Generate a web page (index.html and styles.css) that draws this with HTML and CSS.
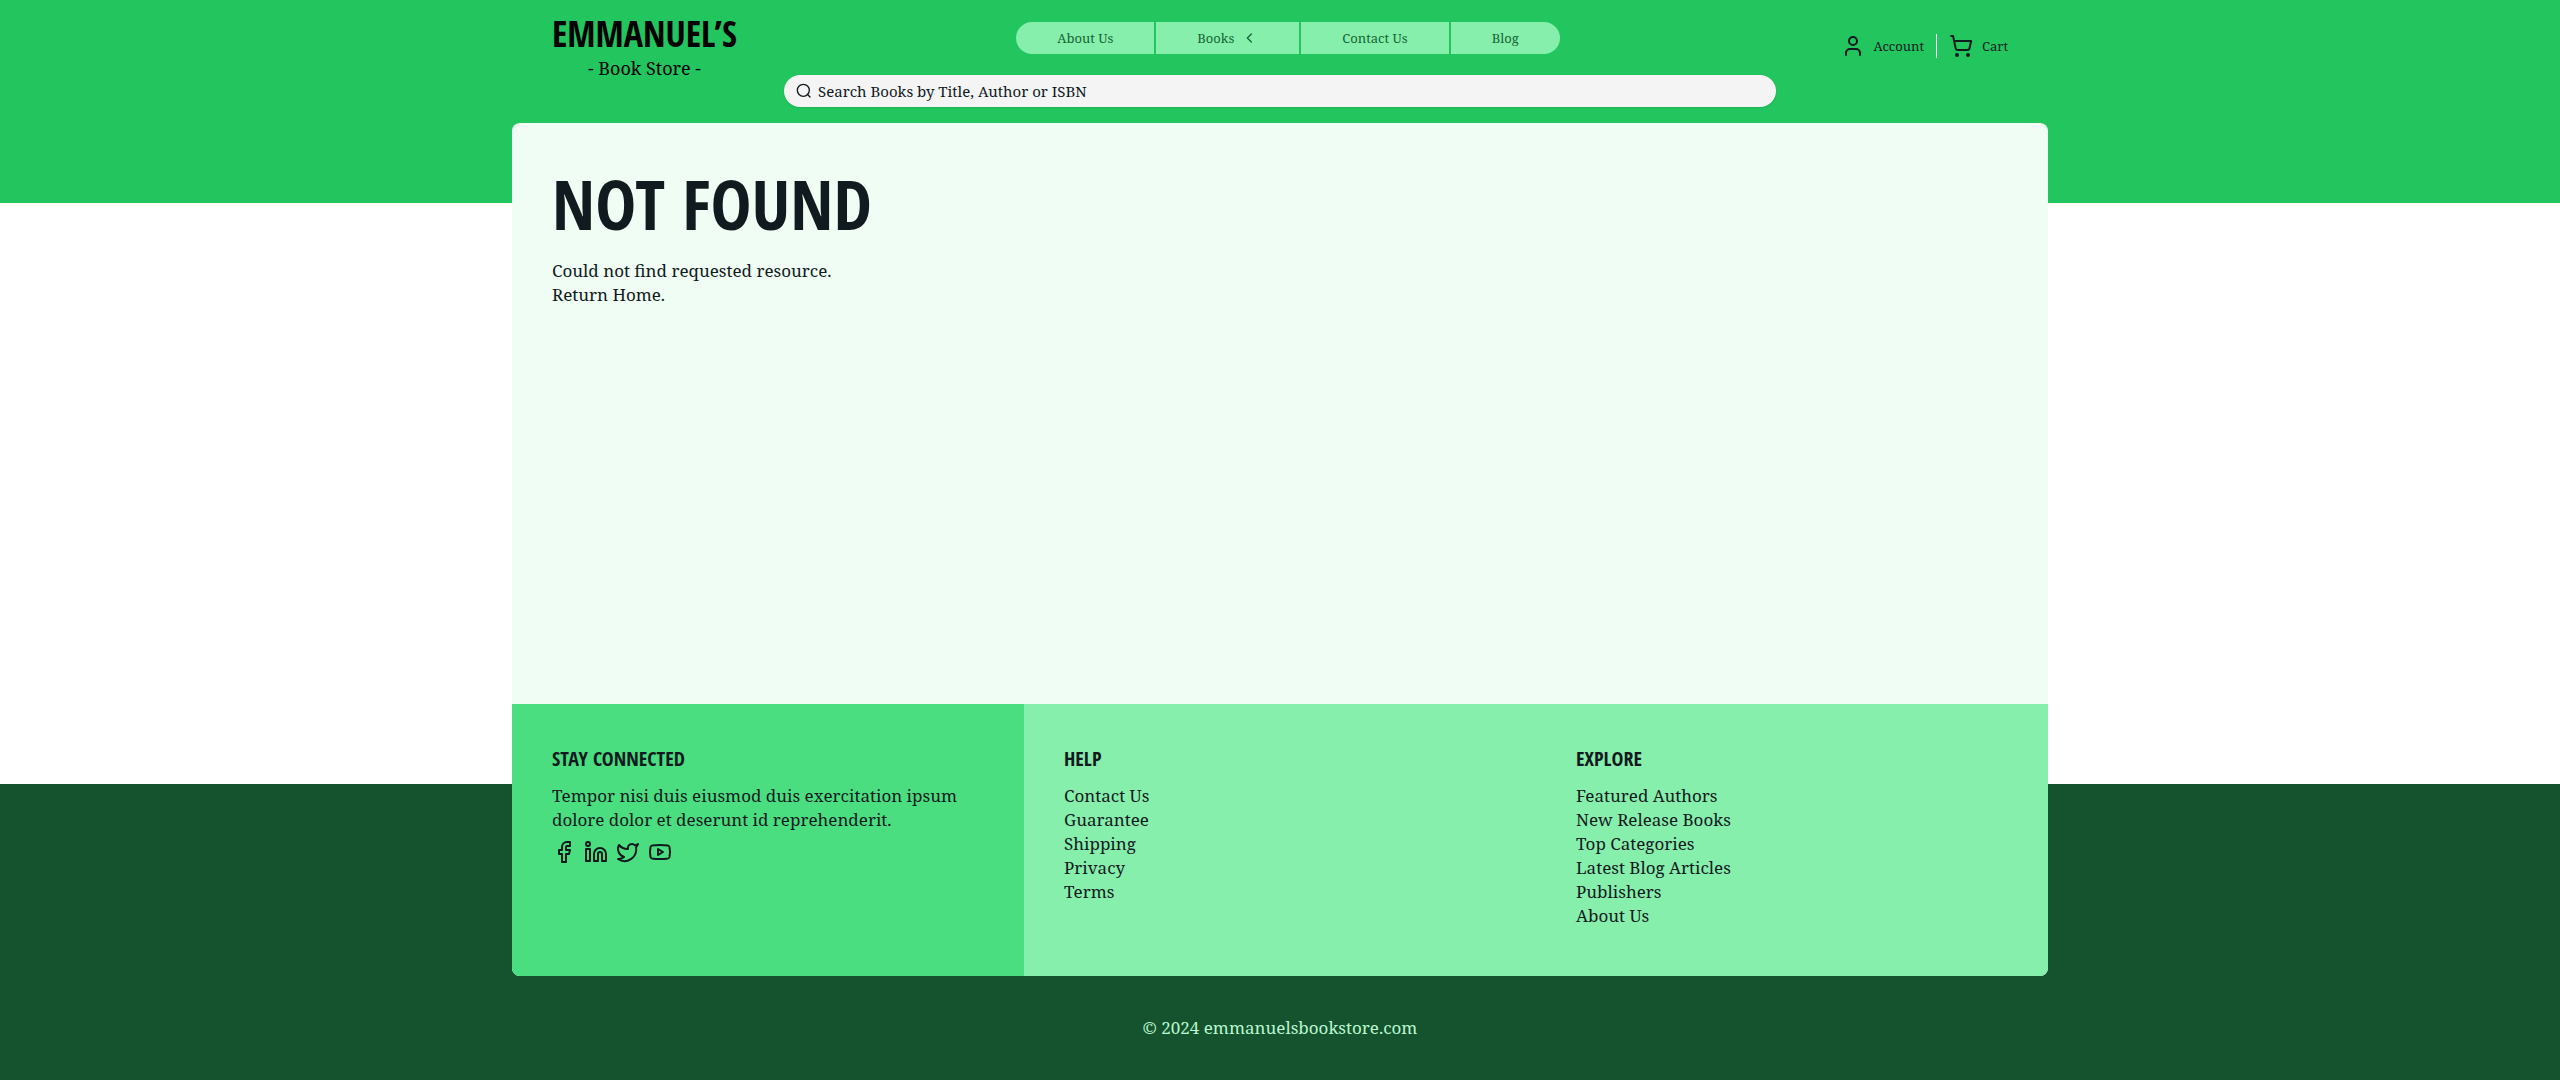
FILE: index.html
```html
<!DOCTYPE html>
<html lang="en">
<head>
<meta charset="utf-8">
<meta name="viewport" content="width=device-width, initial-scale=1">
<title>Emmanuel's Book Store</title>
<link rel="stylesheet" href="styles.css">
</head>
<body>
<div class="page">
  <header class="header">
    <a class="logo" href="#">
      <span class="logo-name">EMMANUEL’S</span>
      <span class="logo-tag">- Book Store -</span>
    </a>
    <div class="header-main">
      <nav class="nav" aria-label="Main">
        <a class="nav-item" href="#">About Us</a>
        <button class="nav-item" type="button">Books
          <svg class="icon icon-small" viewBox="0 0 24 24" aria-hidden="true"><path d="m14 18-6-6 6-6"/></svg>
        </button>
        <a class="nav-item" href="#">Contact Us</a>
        <a class="nav-item" href="#">Blog</a>
      </nav>
      <form class="search" role="search">
        <svg class="icon icon-small" viewBox="0 0 24 24" aria-hidden="true"><circle cx="11" cy="11" r="9"/><path d="m21 21-4-4"/></svg>
        <input class="search-input" type="search" placeholder="Search Books by Title, Author or ISBN" aria-label="Search books">
      </form>
    </div>
    <div class="actions">
      <a class="action" href="#">
        <svg class="icon" viewBox="0 0 24 24" aria-hidden="true"><path d="M19 21v-2a4 4 0 0 0-4-4H9a4 4 0 0 0-4 4v2"/><circle cx="12" cy="7" r="4"/></svg>
        Account
      </a>
      <a class="action" href="#">
        <svg class="icon" viewBox="0 0 24 24" aria-hidden="true"><circle cx="8" cy="21" r="1"/><circle cx="19" cy="21" r="1"/><path d="M2.05 2.05h2l2.66 12.42a2 2 0 0 0 2 1.58h9.78a2 2 0 0 0 1.95-1.57l1.65-7.43H5.12"/></svg>
        Cart
      </a>
    </div>
  </header>

  <div class="panel">
    <main class="content">
      <h1 class="title">NOT FOUND</h1>
      <p>Could not find requested resource.</p>
      <a href="#">Return Home.</a>
    </main>
    <footer class="footer">
      <section class="footer-col footer-connect">
        <h2 class="footer-title">STAY CONNECTED</h2>
        <p>Tempor nisi duis eiusmod duis exercitation ipsum dolore dolor et deserunt id reprehenderit.</p>
        <div class="social">
          <a href="#" aria-label="Facebook"><svg class="icon" viewBox="0 0 24 24"><path d="M18 2h-3a5 5 0 0 0-5 5v3H7v4h3v8h4v-8h3l1-4h-4V7a1 1 0 0 1 1-1h3z"/></svg></a>
          <a href="#" aria-label="LinkedIn"><svg class="icon" viewBox="0 0 24 24"><path d="M16 8a6 6 0 0 1 6 6v7h-4v-7a2 2 0 0 0-4 0v7h-4v-7a6 6 0 0 1 6-6z"/><path d="M2 9h4v12H2z"/><circle cx="4" cy="4" r="2"/></svg></a>
          <a href="#" aria-label="Twitter"><svg class="icon" viewBox="0 0 24 24"><path d="M22 4s-.7 2.100-2 3.400c1.600 10-9.400 17.300-18 11.600 2.200.1 4.400-.6 6-2C3 15.500.5 9.600 3 5c2.200 2.600 5.600 4.100 9 4-.9-4.200 4-6.600 7-3.800 1.100 0 3-1.200 3-1.200z"/></svg></a>
          <a href="#" aria-label="YouTube"><svg class="icon" viewBox="0 0 24 24"><path d="M2.500 17a24.120 24.120 0 0 1 0-10 2 2 0 0 1 1.400-1.400 49.560 49.560 0 0 1 16.200 0A2 2 0 0 1 21.500 7a24.120 24.120 0 0 1 0 10 2 2 0 0 1-1.400 1.400 49.550 49.550 0 0 1-16.200 0A2 2 0 0 1 2.500 17"/><path d="m10 15 5-3-5-3z"/></svg></a>
        </div>
      </section>
      <section class="footer-col">
        <h2 class="footer-title">HELP</h2>
        <ul class="links">
          <li><a href="#">Contact Us</a></li>
          <li><a href="#">Guarantee</a></li>
          <li><a href="#">Shipping</a></li>
          <li><a href="#">Privacy</a></li>
          <li><a href="#">Terms</a></li>
        </ul>
      </section>
      <section class="footer-col">
        <h2 class="footer-title">EXPLORE</h2>
        <ul class="links">
          <li><a href="#">Featured Authors</a></li>
          <li><a href="#">New Release Books</a></li>
          <li><a href="#">Top Categories</a></li>
          <li><a href="#">Latest Blog Articles</a></li>
          <li><a href="#">Publishers</a></li>
          <li><a href="#">About Us</a></li>
        </ul>
      </section>
    </footer>
  </div>
  <p class="copyright">© 2024 emmanuelsbookstore.com</p>
</div>
</body>
</html>
```
FILE: styles.css
```css
:root {
  --ink: #111a1e;
  --serif: "Noto Serif", "DejaVu Serif Condensed", "DejaVu Serif", serif;
  --display: "Open Sans Condensed", "Roboto Condensed", "Open Sans", sans-serif;
}

*,
*::before,
*::after {
  box-sizing: border-box;
}

body {
  margin: 0;
  color: var(--ink);
  font: 17px/24px var(--serif);
}

h1,
h2,
p,
ul {
  margin: 0;
  padding: 0;
}

ul {
  list-style: none;
}

a {
  color: inherit;
  text-decoration: none;
}

/* Green band on top, dark band at the bottom, white between */
.page {
  display: flex;
  flex-direction: column;
  min-height: 100vh;
  padding: 0 20%;
  background:
    linear-gradient(#22c55e, #22c55e) top / 100% 203px no-repeat,
    linear-gradient(#14532d, #14532d) bottom / 100% 296px no-repeat,
    #fff;
}

.icon {
  flex: none;
  display: block;
  width: 24px;
  height: 24px;
  fill: none;
  stroke: currentColor;
  stroke-width: 2;
  stroke-linecap: round;
  stroke-linejoin: round;
}

.icon-small {
  width: 16px;
  height: 16px;
}

.header {
  display: grid;
  grid-template-columns: 232px 1fr 232px;
  padding: 12px 40px 16px;
}

.logo {
  display: flex;
  flex-direction: column;
  align-items: center;
  justify-self: start;
  color: #000;
}

.logo-name {
  font: 700 36px/44px var(--display);
}

.logo-tag {
  font-size: 18px;
}

.header-main {
  display: flex;
  flex-direction: column;
  align-items: center;
  gap: 21px;
  padding-top: 10px;
}

.nav {
  display: flex;
  gap: 2px;
  margin-left: 16px;
  border-radius: 16px;
  overflow: hidden;
}

.nav-item {
  display: flex;
  align-items: center;
  gap: 8px;
  height: 32px;
  padding: 0 41px;
  border: 0;
  background: #86efac;
  color: #166534;
  font: 13px/32px var(--serif);
}

.search {
  display: flex;
  align-items: center;
  gap: 6px;
  align-self: stretch;
  height: 32px;
  padding: 0 12px;
  border-radius: 16px;
  background: #f4f4f5;
  box-shadow: 0 1px 2px rgb(0 0 0 / 10%);
}

.search-input {
  flex: 1;
  padding: 0;
  border: 0;
  outline: 0;
  background: none;
  color: var(--ink);
  font: 15px/24px var(--serif);
}

.search-input::placeholder {
  color: var(--ink);
  opacity: 1;
}

.actions {
  display: flex;
  justify-content: flex-end;
  align-items: center;
  align-self: start;
  height: 24px;
  margin-top: 22px;
}

.action {
  display: flex;
  align-items: center;
  gap: 9px;
  font-size: 13px;
}

.action + .action {
  margin-left: 12px;
  padding-left: 12px;
  border-left: 1px solid #f4f4f5;
}

.panel {
  display: flex;
  flex: 1;
  flex-direction: column;
  border-radius: 8px;
  overflow: hidden;
  background: #f0fdf4;
}

.content {
  flex: 1;
  padding: 40px;
}

.title {
  margin-bottom: 16px;
  font: 700 69px/80px var(--display);
}

.footer {
  display: grid;
  grid-template-columns: repeat(3, 1fr);
  background: #86efac;
}

.footer-col {
  padding: 40px 40px 48px;
}

.footer-connect {
  background: #4ade80;
}

.footer-title {
  margin-bottom: 10px;
  font: 700 20px/30px var(--display);
}

.social {
  display: flex;
  gap: 8px;
  padding-top: 8px;
}

.copyright {
  padding: 40px 0;
  color: #bbf7d0;
  text-align: center;
}
```
